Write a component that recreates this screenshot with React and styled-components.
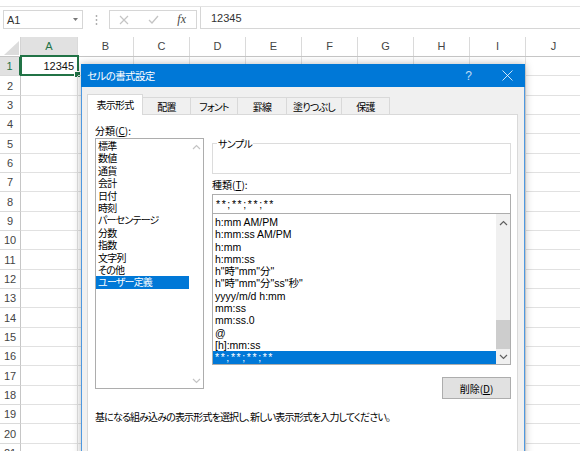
import React from 'react';
import styled, { createGlobalStyle } from 'styled-components';

const GlobalStyle = createGlobalStyle`
  html, body { margin: 0; padding: 0; background: #fff; }
  body { font-family: "Liberation Sans", Arial, sans-serif; overflow: hidden; }
  #root { width: 580px; height: 451px; }
`;

const Page = styled.div`
  position: relative;
  width: 580px;
  height: 451px;
  overflow: hidden;
  background: #fff;
`;

/* ---------- formula bar ---------- */
const FormulaBar = styled.div`
  display: flex;
  align-items: flex-start;
  margin-top: 6px;
  border-top: 1px solid #e3e3e3;
  height: 22px;
`;

const NameBox = styled.div`
  box-sizing: border-box;
  margin: 3px 0 0 3px;
  width: 80px;
  height: 19px;
  border: 1px solid #d6d6d6;
  display: flex;
  align-items: center;
  justify-content: space-between;
  padding: 0 4px 0 3px;
  font-size: 11px;
  color: #333;
`;

const Dots = styled.div`
  width: 26px;
  height: 19px;
  margin-top: 3px;
  display: flex;
  align-items: center;
  justify-content: center;
`;

const FxGroup = styled.div`
  box-sizing: border-box;
  margin-top: 3px;
  width: 88px;
  height: 19px;
  border: 1px solid #d6d6d6;
  display: flex;
`;

const FxSlot = styled.div`
  flex: 1;
  display: flex;
  align-items: center;
  justify-content: center;
  font-family: "Liberation Serif", serif;
  font-style: italic;
  font-size: 12px;
  color: #444;
`;

const FormulaInput = styled.div`
  box-sizing: border-box;
  margin-left: 3px;
  flex: 1;
  height: 22px;
  border-left: 1px solid #d6d6d6;
  border-bottom: 1px solid #d6d6d6;
  padding-left: 10px;
  display: flex;
  align-items: center;
  font-size: 11px;
  color: #333;
`;

/* ---------- sheet ---------- */
const HeaderRow = styled.div`
  display: flex;
  margin-top: 8px;
  height: 20px;
  box-sizing: border-box;
  border-bottom: 1px solid #c6c6c6;
`;

const Corner = styled.div`
  flex: none;
  width: 21px;
  box-sizing: border-box;
  border-right: 1px solid #d4d4d4;
  display: flex;
  align-items: flex-end;
  justify-content: flex-end;
  padding: 0 1px 1px 0;
`;

const ColHead = styled.div`
  flex: none;
  width: ${p => p.$w}px;
  box-sizing: border-box;
  border-right: 1px solid #dadada;
  text-align: center;
  font-size: 11px;
  line-height: 19px;
  color: ${p => (p.$sel ? '#217346' : '#444')};
  background: ${p => (p.$sel ? '#e1e1e1' : '#fff')};
  border-bottom: ${p => (p.$sel ? '2px solid #217346' : 'none')};
  margin-bottom: ${p => (p.$sel ? '-1px' : '0')};
`;

const Row = styled.div`
  display: flex;
  height: 19px;
  &:nth-child(3n + 1) { height: 20px; }
`;

const RowHead = styled.div`
  flex: none;
  width: 21px;
  box-sizing: border-box;
  border-bottom: 1px solid #dadada;
  border-right: ${p => (p.$sel ? '2px solid #217346' : '1px solid #c6c6c6')};
  background: ${p => (p.$sel ? '#e1e1e1' : '#fff')};
  color: ${p => (p.$sel ? '#217346' : '#444')};
  font-size: 11px;
  display: flex;
  align-items: center;
  justify-content: center;
`;

const Cell = styled.div`
  position: relative;
  flex: none;
  width: ${p => p.$w}px;
  box-sizing: border-box;
  border-right: 1px solid #e1e1e1;
  border-bottom: 1px solid #e1e1e1;
  display: flex;
  align-items: center;
  justify-content: flex-end;
  padding-right: 3px;
  font-size: 11px;
  color: #111;
`;

const Selection = styled.div`
  position: absolute;
  left: -1px;
  top: -2px;
  right: -2px;
  bottom: -1px;
  border: 2px solid #217346;
  pointer-events: none;
`;

const FillHandle = styled.div`
  position: absolute;
  right: -4px;
  bottom: -4px;
  width: 5px;
  height: 5px;
  background: #217346;
  border: 1px solid #fff;
`;

/* ---------- dialog ---------- */
const Dialog = styled.div`
  position: absolute;
  left: 81px;
  top: 64px;
  width: 444px;
  height: 400px;
  box-sizing: border-box;
  border: 1px solid #4d98e0;
  border-top: none;
  background: #f0f0f0;
  box-shadow: 0 0 8px rgba(0, 0, 0, 0.28);
  font-family: "Noto Sans CJK JP", sans-serif;
  font-feature-settings: "palt";
  color: #000;
  display: flex;
  flex-direction: column;
`;

const TitleBar = styled.div`
  flex: none;
  height: 23px;
  margin: 0 -1px;
  background: #0078d7;
  display: flex;
  align-items: center;
`;

const TitleText = styled.div`
  flex: 1;
  padding-left: 6px;
  font-size: 10.5px;
  letter-spacing: -0.6px;
  color: #fff;
`;

const TitleBtn = styled.div`
  width: ${p => p.$w}px;
  height: 23px;
  display: flex;
  align-items: center;
  justify-content: center;
  color: rgba(255, 255, 255, 0.75);
  font-family: "Liberation Sans", sans-serif;
  font-size: 12px;
`;

const Body = styled.div`
  flex: 1;
  display: flex;
  flex-direction: column;
  padding: 7px 6px 0 5px;
`;

const TabList = styled.div`
  display: flex;
  align-items: flex-end;
  height: 20px;
`;

const Tab = styled.div`
  position: relative;
  z-index: ${p => (p.$active ? 1 : 0)};
  flex: none;
  width: ${p => p.$w}px;
  height: ${p => (p.$active ? 21 : 17)}px;
  margin-bottom: ${p => (p.$active ? -1 : 0)}px;
  box-sizing: border-box;
  border-top: 1px solid #d9d9d9;
  border-right: 1px solid #d9d9d9;
  border-left: ${p => (p.$first ? '1px solid #d9d9d9' : 'none')};
  background: ${p => (p.$active ? '#fff' : '#f0f0f0')};
  display: flex;
  align-items: center;
  justify-content: center;
  padding-bottom: ${p => (p.$active ? 2 : 0)}px;
  font-size: 10px;
  letter-spacing: -0.8px;
`;

const Panel = styled.div`
  flex: 1;
  background: #fff;
  border: 1px solid #d9d9d9;
  padding: 8px 5px 0 7px;
`;

const PanelGrid = styled.div`
  display: grid;
  grid-template-columns: 109px 299px;
  column-gap: 8px;
`;

const Column = styled.div`
  display: flex;
  flex-direction: column;
`;

const Label = styled.div`
  font-size: 10px;
  line-height: ${p => p.$lh || 15}px;
  margin-top: ${p => p.$mt || 0}px;
  u { text-underline-offset: 1px; }
`;

const ListBox = styled.div`
  box-sizing: border-box;
  height: ${p => p.$h}px;
  margin-top: ${p => p.$mt || 0}px;
  border: 1px solid #adadad;
  display: flex;
  background: #fff;
`;

const Items = styled.div`
  flex: 1;
  overflow: hidden;
  padding-top: ${p => p.$pt}px;
`;

const Item = styled.div`
  height: ${p => p.$h}px;
  line-height: ${p => p.$h}px;
  padding-left: 2px;
  white-space: nowrap;
  font-family: ${p => (p.$latin ? '"Liberation Sans", "Noto Sans CJK JP", sans-serif' : 'inherit')};
  font-size: ${p => (p.$latin ? '10.5px' : '10px')};
  letter-spacing: ${p => (p.$wide ? '1.6px' : p.$latin ? '0' : '-0.8px')};
  background: ${p => (p.$sel ? '#0078d7' : 'transparent')};
  color: ${p => (p.$sel ? '#fff' : '#000')};
`;

const ScrollBar = styled.div`
  flex: none;
  width: 14px;
  display: flex;
  flex-direction: column;
  background: ${p => (p.$disabled ? '#fff' : '#f0f0f0')};
`;

const ScrollBtn = styled.div`
  flex: none;
  height: ${p => p.$h}px;
  display: flex;
  align-items: center;
  justify-content: center;
`;

const Track = styled.div`
  flex: 1;
  display: flex;
  flex-direction: column;
  justify-content: flex-end;
  align-items: center;
`;

const Thumb = styled.div`
  width: 14px;
  height: 29px;
  background: #cdcdcd;
`;

const Group = styled.div`
  box-sizing: border-box;
  margin-top: 20px;
  height: 31px;
  border: 1px solid #dcdcdc;
`;

const Legend = styled.div`
  width: fit-content;
  margin: -7px 0 0 4px;
  padding: 0 1px;
  background: #fff;
  font-size: 10px;
  line-height: 14px;
  letter-spacing: -0.6px;
`;

const TextInput = styled.div`
  box-sizing: border-box;
  margin-top: 2px;
  height: 20px;
  border: 1px solid #adadad;
  padding-left: 3px;
  font-family: "Liberation Sans", sans-serif;
  font-size: 10.5px;
  line-height: 18px;
  letter-spacing: 1.6px;
  white-space: nowrap;
`;

const Button = styled.div`
  align-self: flex-end;
  box-sizing: border-box;
  margin-top: 12px;
  width: 69px;
  height: 22px;
  background: #e1e1e1;
  border: 1px solid #adadad;
  display: flex;
  align-items: center;
  justify-content: center;
  font-size: 10px;
  u { text-underline-offset: 1px; }
`;

const Description = styled.div`
  margin-top: 11px;
  font-size: 10px;
  line-height: 14px;
  letter-spacing: -0.85px;
  white-space: nowrap;
`;

const Chevron = ({ dir, color }) => (
  <svg width="9" height="6" viewBox="0 0 9 6">
    <polyline
      points={dir === 'up' ? '1,5 4.5,1.5 8,5' : '1,1 4.5,4.5 8,1'}
      fill="none"
      stroke={color}
      strokeWidth="1.2"
    />
  </svg>
);

const COLS = [
  ['A', 57], ['B', 56], ['C', 56], ['D', 56], ['E', 56],
  ['F', 56], ['G', 56], ['H', 56], ['I', 56], ['J', 56],
];

const TABS = [
  ['表示形式', 56], ['配置', 48], ['フォント', 47],
  ['罫線', 49], ['塗りつぶし', 55], ['保護', 48],
];

const CATEGORIES = [
  '標準', '数値', '通貨', '会計', '日付', '時刻', 'パーセンテージ',
  '分数', '指数', '文字列', 'その他', 'ユーザー定義',
];

const FORMATS = [
  'h:mm AM/PM', 'h:mm:ss AM/PM', 'h:mm', 'h:mm:ss', 'h"時"mm"分"',
  'h"時"mm"分"ss"秒"', 'yyyy/m/d h:mm', 'mm:ss', 'mm:ss.0', '@',
  '[h]:mm:ss', '**;**;**;**',
];

export default function App() {
  const rows = Array.from({ length: 21 }, (_, i) => i + 1);
  return (
    <Page>
      <GlobalStyle />
      <FormulaBar>
        <NameBox>
          <span>A1</span>
          <svg width="5" height="3" viewBox="0 0 5 3"><polygon points="0,0 5,0 2.5,3" fill="#777" /></svg>
        </NameBox>
        <Dots>
          <svg width="3" height="12" viewBox="0 0 3 12">
            <circle cx="1.5" cy="2" r="0.9" fill="#a8a8a8" />
            <circle cx="1.5" cy="6" r="0.9" fill="#a8a8a8" />
            <circle cx="1.5" cy="10" r="0.9" fill="#a8a8a8" />
          </svg>
        </Dots>
        <FxGroup>
          <FxSlot>
            <svg width="10" height="10" viewBox="0 0 10 10">
              <path d="M1 1 L9 9 M9 1 L1 9" stroke="#c4c4c4" strokeWidth="1.2" />
            </svg>
          </FxSlot>
          <FxSlot>
            <svg width="11" height="9" viewBox="0 0 11 9">
              <polyline points="1,5 4,8 10,1" fill="none" stroke="#c4c4c4" strokeWidth="1.3" />
            </svg>
          </FxSlot>
          <FxSlot>fx</FxSlot>
        </FxGroup>
        <FormulaInput>12345</FormulaInput>
      </FormulaBar>

      <HeaderRow>
        <Corner>
          <svg width="15" height="14" viewBox="0 0 15 14"><polygon points="0,14 15,14 15,0" fill="#dcdcdc" /></svg>
        </Corner>
        {COLS.map(([c, w]) => (
          <ColHead key={c} $w={w} $sel={c === 'A'}>{c}</ColHead>
        ))}
      </HeaderRow>
      {rows.map(r => (
        <Row key={r}>
          <RowHead $sel={r === 1}>{r}</RowHead>
          {COLS.map(([c, w]) => (
            <Cell key={c} $w={w}>
              {r === 1 && c === 'A' && (
                <>
                  12345
                  <Selection><FillHandle /></Selection>
                </>
              )}
            </Cell>
          ))}
        </Row>
      ))}

      <Dialog>
        <TitleBar>
          <TitleText>セルの書式設定</TitleText>
          <TitleBtn $w={41}>?</TitleBtn>
          <TitleBtn $w={36}>
            <svg width="11" height="11" viewBox="0 0 11 11">
              <path d="M0.5 0.5 L10.5 10.5 M10.5 0.5 L0.5 10.5" stroke="rgba(255,255,255,0.8)" strokeWidth="1" />
            </svg>
          </TitleBtn>
        </TitleBar>
        <Body>
          <TabList>
            {TABS.map(([t, w], i) => (
              <Tab key={t} $w={w} $active={i === 0} $first={i === 0}>{t}</Tab>
            ))}
          </TabList>
          <Panel>
            <PanelGrid>
              <Column>
                <Label>分類(<u>C</u>):</Label>
                <ListBox $h={251}>
                  <Items $pt={1}>
                    {CATEGORIES.map((c, i) => (
                      <Item key={c} $h={12.4} $sel={i === CATEGORIES.length - 1}>{c}</Item>
                    ))}
                  </Items>
                  <ScrollBar $disabled>
                    <ScrollBtn $h={15}><Chevron dir="up" color="#c4c4c4" /></ScrollBtn>
                    <Track />
                    <ScrollBtn $h={15}><Chevron dir="down" color="#c4c4c4" /></ScrollBtn>
                  </ScrollBar>
                </ListBox>
              </Column>
              <Column>
                <Group>
                  <Legend>サンプル</Legend>
                </Group>
                <Label $lh={14} $mt={4}>種類(<u>T</u>):</Label>
                <TextInput>**;**;**;**</TextInput>
                <ListBox $h={152} $mt={-1}>
                  <Items $pt={2}>
                    {FORMATS.map((f, i) => (
                      <Item
                        key={f}
                        $latin
                        $wide={f.startsWith('*')}
                        $h={12.3}
                        $sel={i === FORMATS.length - 1}
                      >
                        {f}
                      </Item>
                    ))}
                  </Items>
                  <ScrollBar>
                    <ScrollBtn $h={17}><Chevron dir="up" color="#606060" /></ScrollBtn>
                    <Track><Thumb /></Track>
                    <ScrollBtn $h={15}><Chevron dir="down" color="#606060" /></ScrollBtn>
                  </ScrollBar>
                </ListBox>
                <Button>削除(<u>D</u>)</Button>
              </Column>
            </PanelGrid>
            <Description>基になる組み込みの表示形式を選択し、新しい表示形式を入力してください。</Description>
          </Panel>
        </Body>
      </Dialog>
    </Page>
  );
}
